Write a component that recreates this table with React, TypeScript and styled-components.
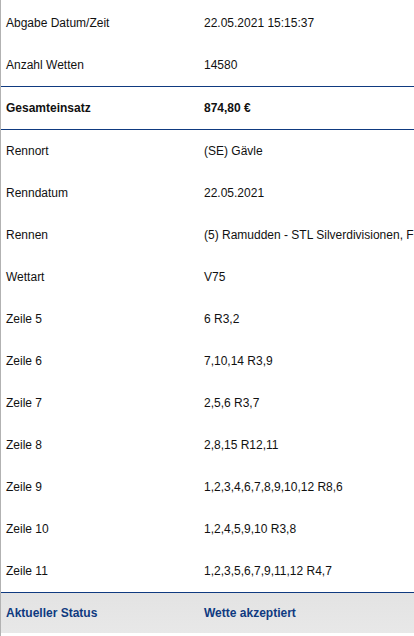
import styled, { createGlobalStyle, css } from 'styled-components';

const GlobalStyle = createGlobalStyle`
  html, body {
    margin: 0;
    padding: 0;
    background: #fff;
    overflow: hidden;
  }
  body {
    font-family: "Liberation Sans", Arial, sans-serif;
    font-size: 12px;
    color: #111;
  }
`;

const blue = '#0f3a80';

const Sheet = styled.div`
  width: 414px;
  height: 636px;
  box-sizing: border-box;
  padding-top: 2px;
  border-left: 1px solid #b2b2b2;
  overflow: hidden;
`;

const Row = styled.div<{ $bold?: boolean; $lineBelow?: boolean; $status?: boolean }>`
  display: grid;
  grid-template-columns: 198px 1fr;
  align-items: center;
  height: 42px;
  white-space: nowrap;

  ${props =>
    props.$bold &&
    css`
      font-weight: bold;
    `}

  ${props =>
    props.$lineBelow &&
    css`
      height: 43px;
      border-bottom: 1px solid ${blue};
      box-sizing: border-box;
    `}

  ${props =>
    props.$status &&
    css`
      height: 40px;
      background: linear-gradient(#e3e3e3, #e8e8e8);
      color: ${blue};
      font-weight: bold;
    `}
`;

const Cell = styled.div`
  padding-left: 5px;
  overflow: visible;
`;

const rows: { label: string; value: string; bold?: boolean; line?: boolean }[] = [
  { label: 'Abgabe Datum/Zeit', value: '22.05.2021 15:15:37' },
  { label: 'Anzahl Wetten', value: '14580', line: true },
  { label: 'Gesamteinsatz', value: '874,80 €', bold: true, line: true },
  { label: 'Rennort', value: '(SE) Gävle' },
  { label: 'Renndatum', value: '22.05.2021' },
  { label: 'Rennen', value: '(5) Ramudden - STL Silverdivisionen, Final' },
  { label: 'Wettart', value: 'V75' },
  { label: 'Zeile 5', value: '6 R3,2' },
  { label: 'Zeile 6', value: '7,10,14 R3,9' },
  { label: 'Zeile 7', value: '2,5,6 R3,7' },
  { label: 'Zeile 8', value: '2,8,15 R12,11' },
  { label: 'Zeile 9', value: '1,2,3,4,6,7,8,9,10,12 R8,6' },
  { label: 'Zeile 10', value: '1,2,4,5,9,10 R3,8' },
  { label: 'Zeile 11', value: '1,2,3,5,6,7,9,11,12 R4,7', line: true },
];

export default function App() {
  return (
    <>
      <GlobalStyle />
      <Sheet>
        {rows.map(r => (
          <Row key={r.label} $bold={r.bold} $lineBelow={r.line}>
            <Cell>{r.label}</Cell>
            <Cell>{r.value}</Cell>
          </Row>
        ))}
        <Row $status>
          <Cell>Aktueller Status</Cell>
          <Cell>Wette akzeptiert</Cell>
        </Row>
      </Sheet>
    </>
  );
}
